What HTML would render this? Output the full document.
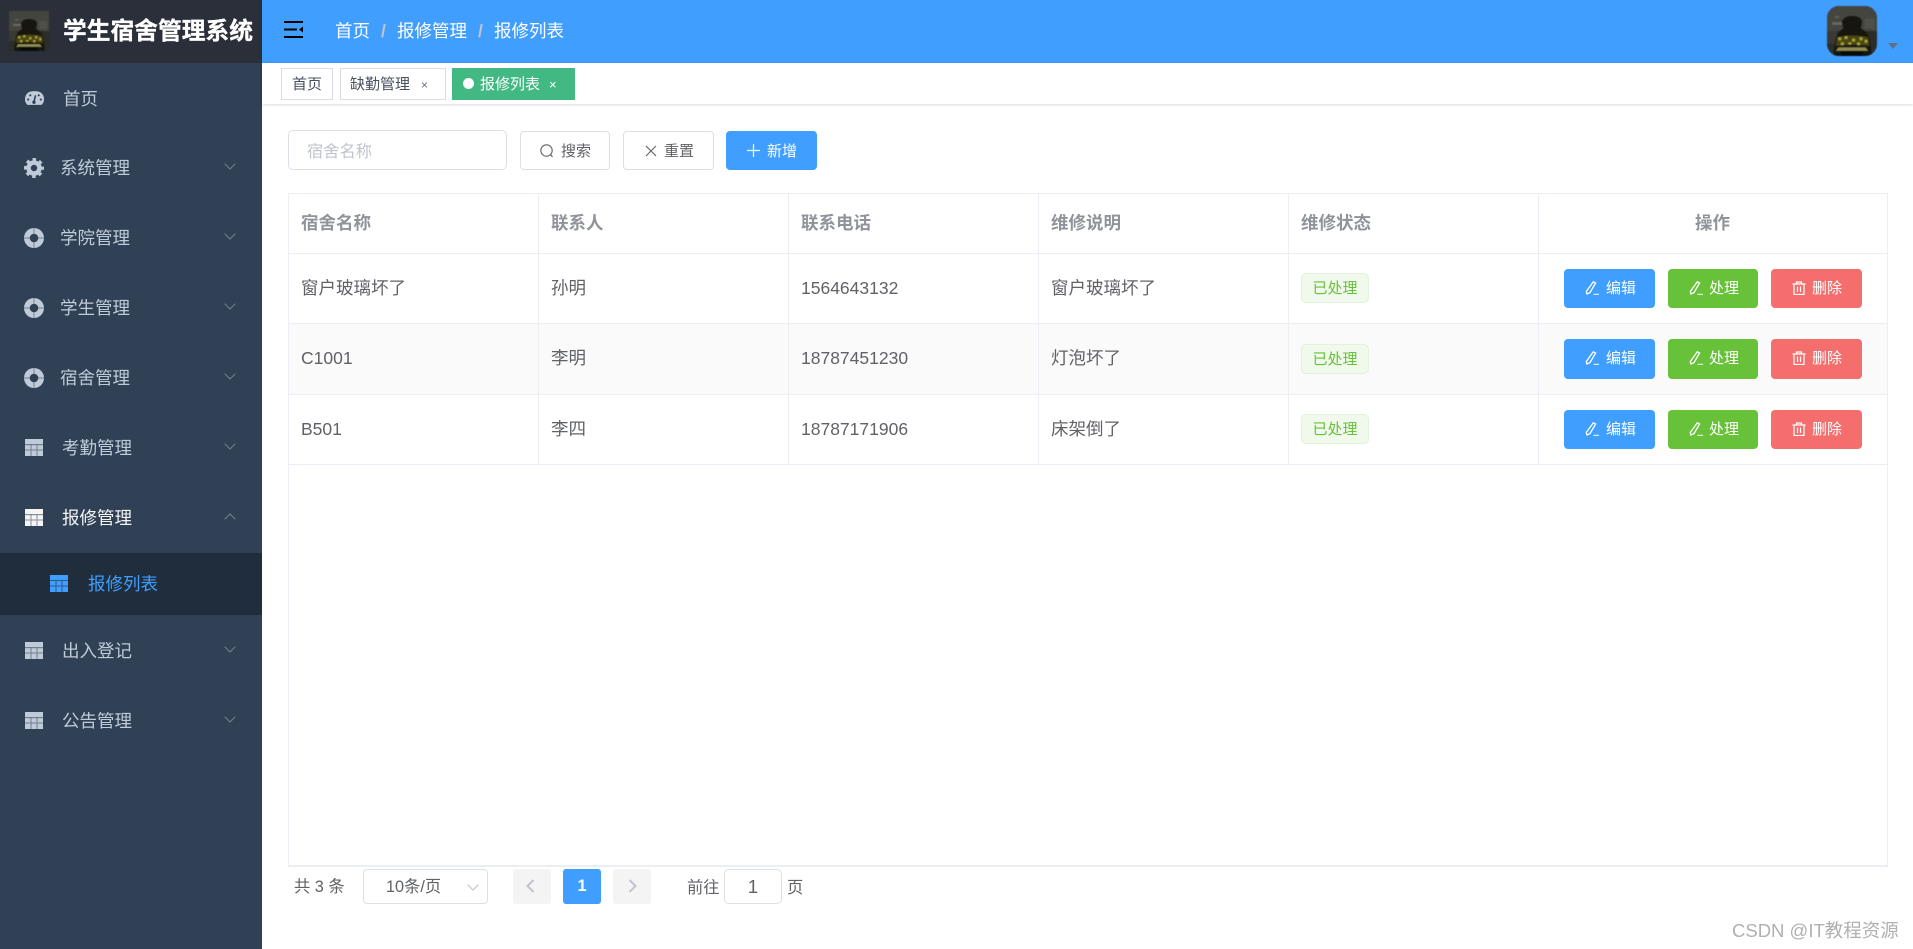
<!DOCTYPE html>
<html lang="zh-CN"><head><meta charset="utf-8"><title>学生宿舍管理系统</title>
<style>
*{box-sizing:border-box}
html,body{margin:0;padding:0;width:1913px;height:949px;overflow:hidden;background:#fff;font-family:"Liberation Sans","Noto Sans CJK SC",sans-serif}
div,span,svg{position:absolute}
.t{white-space:nowrap}
.side{left:0;top:0;width:262px;height:949px;background:#304156}
.nav{left:60px;font-size:17.5px;line-height:30px;height:30px;color:#bfcbd9;white-space:nowrap}
.hd{font-size:17.5px;font-weight:700;color:#909399;line-height:30px;height:30px;top:208px;white-space:nowrap}
.c{font-size:17.5px;color:#606266;line-height:30px;height:30px;white-space:nowrap}
.hl{background:#ebeef5;height:1px;left:288px;width:1600px}
.vl{background:#ebeef5;width:1px}
.tagd{left:1301px;width:68px;height:30px;background:#f0f9eb;border:1px solid #e1f3d8;border-radius:5px;color:#67c23a;font-size:15px;line-height:29px;text-align:center}
.b{height:39px;border-radius:4px;color:#fff;font-size:15px}
.b span{white-space:nowrap;line-height:40px;top:0}
.tag{top:68px;height:32px;border:1px solid #d8dce5;background:#fff;color:#495060;font-size:15px;line-height:32px}
.wb{top:131px;height:39px;border:1px solid #dcdfe6;border-radius:4px;background:#fff;color:#606266;font-size:15px;line-height:38px}
.pic{filter:blur(.6px)}
</style></head><body>
<svg width="0" height="0" style="left:0;top:0"><defs>
<symbol id="pic" viewBox="0 0 40 40">
<rect width="40" height="40" fill="#2c2c28"/>
<rect x="0" y="0" width="40" height="20" fill="#45453f"/>
<rect x="0" y="20" width="8" height="10" fill="#3a3a34"/>
<rect x="4" y="13" width="8" height="2" fill="#6b6b60"/>
<rect x="6" y="8" width="4" height="1.500" fill="#5f5f55"/>
<rect x="30" y="10" width="8" height="8" fill="#50504a"/>
<path d="M5 40 L7 26 Q9 20 13 18 L12 13 Q13 8 20 8 Q28 8 28 13 L27 18 Q32 20 34 26 L36 40Z" fill="#16160f"/>
<path d="M8 25 Q20 22 33 25 L34 32 Q20 30 7 32Z" fill="#4a4716"/>
<g fill="#a8a530"><rect x="9" y="25" width="2.500" height="2.500"/><rect x="14" y="24" width="2.500" height="2.500"/><rect x="20" y="26" width="2.500" height="2.500"/><rect x="26" y="25" width="2.500" height="2.500"/><rect x="30" y="27" width="2.500" height="2.500"/><rect x="11" y="29" width="2.500" height="2.500"/><rect x="17" y="29" width="2.500" height="2"/><rect x="24" y="29" width="2.500" height="2.500"/></g>
<path d="M9 33 L31 33 L33 36 L7 36Z" fill="#8d8a4e"/>
<rect x="11" y="36" width="18" height="4" fill="#0a0a0a"/>
</symbol>
<symbol id="tb" viewBox="0 0 18 17"><rect width="18" height="17" fill="currentColor"/><rect x="0" y="5" width="18" height="1.200" fill="#304156" opacity=".55"/><path d="M6 5.500V17M12 5.500V17M0 11H18" stroke="#304156" stroke-width="1" opacity=".55" fill="none"/></symbol>
<symbol id="buoy" viewBox="0 0 20 20"><circle cx="10" cy="10" r="10" fill="currentColor"/><circle cx="10" cy="10" r="4.300" fill="#304156"/><path d="M10 0V6M10 14V20M0 10H6M14 10H20" stroke="#304156" stroke-width=".7" opacity=".7"/></symbol>
<symbol id="chev" viewBox="0 0 12 7"><path d="M.7.7 6 6 11.300.7" fill="none" stroke="#77828f" stroke-width="1"/></symbol>
<symbol id="pen" viewBox="0 0 14 14"><path d="M8.300.8 10.600 2 5 11.600 1.900 13 1.300 10.500Z" fill="none" stroke="#fff" stroke-width="1.300"/><path d="M8.500 13.300H14" stroke="#fff" stroke-width="1"/></symbol>
<symbol id="trash" viewBox="0 0 14 14"><path d="M.5 3H13.500M4.500 3V1H9.500V3M2 3V13.500H12V3M5.500 5.500V11M8.500 5.500V11" fill="none" stroke="#fff" stroke-width="1.200"/></symbol>
</defs></svg>

<div class="side"></div>
<div style="left:0;top:0;width:262px;height:63px;background:#2b2f3a"></div>
<svg class="pic" style="left:9px;top:11px" width="40" height="40"><use href="#pic"/></svg>
<div class="t" style="left:63px;top:12.500px;line-height:38px;font-size:23.750px;font-weight:700;color:#fff;-webkit-text-stroke:.3px #fff">学生宿舍管理系统</div>

<!-- gauge -->
<svg style="left:25px;top:91px" width="19" height="14" viewBox="0 0 18 13"><path d="M2.200 13Q0 10.500 0 8 0 0 9 0 18 0 18 8 18 10.500 15.800 13Z" fill="#bfcbd9"/><path d="M8.500 10 10 4" stroke="#304156" stroke-width="1.500"/><circle cx="8.500" cy="10.500" r="1.600" fill="#304156"/><circle cx="3" cy="8" r="1" fill="#304156"/><circle cx="5" cy="4" r="1" fill="#304156"/><circle cx="15" cy="8" r="1" fill="#304156"/><circle cx="13" cy="4" r="1" fill="#304156"/></svg>
<div class="nav" style="left:63px;top:83.500px">首页</div>
<!-- gear -->
<svg style="left:24px;top:158px" width="20" height="20" viewBox="0 0 20 20"><circle cx="10" cy="10" r="5.500" fill="none" stroke="#bfcbd9" stroke-width="4.500"/><circle cx="10" cy="10" r="8.600" fill="none" stroke="#bfcbd9" stroke-width="2.800" stroke-dasharray="3.500 3.250" stroke-dashoffset="1.700"/></svg>
<div class="nav" style="top:153px">系统管理</div>
<svg style="left:224px;top:163px" width="12" height="7"><use href="#chev"/></svg>

<svg style="left:24px;top:228px;color:#bfcbd9" width="20" height="20"><use href="#buoy"/></svg>
<div class="nav" style="top:223px">学院管理</div>
<svg style="left:224px;top:233px" width="12" height="7"><use href="#chev"/></svg>

<svg style="left:24px;top:298px;color:#bfcbd9" width="20" height="20"><use href="#buoy"/></svg>
<div class="nav" style="top:293px">学生管理</div>
<svg style="left:224px;top:303px" width="12" height="7"><use href="#chev"/></svg>

<svg style="left:24px;top:368px;color:#bfcbd9" width="20" height="20"><use href="#buoy"/></svg>
<div class="nav" style="top:363px">宿舍管理</div>
<svg style="left:224px;top:373px" width="12" height="7"><use href="#chev"/></svg>

<svg style="left:25px;top:439px;color:#bfcbd9" width="18" height="17"><use href="#tb"/></svg>
<div class="nav" style="left:62px;top:433px">考勤管理</div>
<svg style="left:224px;top:443px" width="12" height="7"><use href="#chev"/></svg>

<svg style="left:25px;top:509px;color:#f4f4f5" width="18" height="17"><use href="#tb"/></svg>
<div class="nav" style="left:62px;top:503px;color:#f4f4f5">报修管理</div>
<svg style="left:224px;top:513px" width="12" height="7" viewBox="0 0 12 7"><path d="M.7 6.300 6 1 11.300 6.300" fill="none" stroke="#77828f" stroke-width="1"/></svg>

<div style="left:0;top:553px;width:262px;height:62px;background:#1f2d3d"></div>
<svg style="left:50px;top:575px" width="18" height="17" viewBox="0 0 18 17"><rect width="18" height="17" fill="#409eff"/><path d="M0 5.500H18M0 11H18M6 5.500V17M12 5.500V17" stroke="#1f2d3d" stroke-width="1" opacity=".6"/></svg>
<div class="nav" style="left:88px;top:569px;color:#409eff">报修列表</div>

<svg style="left:25px;top:642px;color:#bfcbd9" width="18" height="17"><use href="#tb"/></svg>
<div class="nav" style="left:62px;top:636px">出入登记</div>
<svg style="left:224px;top:646px" width="12" height="7"><use href="#chev"/></svg>

<svg style="left:25px;top:712px;color:#bfcbd9" width="18" height="17"><use href="#tb"/></svg>
<div class="nav" style="left:62px;top:706px">公告管理</div>
<svg style="left:224px;top:716px" width="12" height="7"><use href="#chev"/></svg>

<!-- header -->
<div style="left:262px;top:0;width:1651px;height:63px;background:#409eff"></div>
<svg style="left:284px;top:21px" width="19" height="17" viewBox="0 0 19 17"><path d="M0 1H19M0 8.500H13M0 16H19" stroke="#000" stroke-width="2"/><path d="M19 5.500 15 8.500 19 11.500Z" fill="#000"/></svg>
<div class="t" style="left:335px;top:16px;line-height:30px;font-size:17.500px;color:#fff">首页</div>
<div class="t" style="left:381px;top:16px;line-height:30px;font-size:17.500px;color:#c0c4cc;font-weight:700">/</div>
<div class="t" style="left:397px;top:16px;line-height:30px;font-size:17.500px;color:#fff">报修管理</div>
<div class="t" style="left:478px;top:16px;line-height:30px;font-size:17.500px;color:#c0c4cc;font-weight:700">/</div>
<div class="t" style="left:494px;top:16px;line-height:30px;font-size:17.500px;color:#fff">报修列表</div>
<div class="pic" style="left:1827px;top:6px;width:50px;height:50px;border-radius:12px;overflow:hidden"><svg style="left:0;top:0" width="50" height="50"><use href="#pic"/></svg></div>
<svg style="left:1888px;top:43px" width="10" height="6" viewBox="0 0 10 6"><path d="M0 0H10L5 6Z" fill="#5f6f85"/></svg>

<!-- tags bar -->
<div style="left:262px;top:63px;width:1651px;height:41px;background:#fff;box-shadow:0 1px 3px rgba(0,0,0,.12),0 0 3px rgba(0,0,0,.04)"></div>
<div class="tag" style="left:281px;width:52px;padding-left:10px">首页</div>
<div class="tag" style="left:340px;width:106px;padding-left:9px">缺勤管理<span style="left:80px;top:0;font-size:12px;color:#6b7280">×</span></div>
<div class="tag" style="left:452px;width:123px;background:#42b983;border-color:#42b983;color:#fff;padding-left:27px"><span style="left:10px;top:9px;width:11px;height:11px;border-radius:50%;background:#fff"></span>报修列表<span style="left:96px;top:0;font-size:13px">×</span></div>

<!-- search row -->
<div style="left:288px;top:130px;width:219px;height:40px;border:1px solid #dcdfe6;border-radius:5px;background:#fff"></div>
<div class="t" style="left:307px;top:136.500px;line-height:30px;font-size:16.250px;color:#c0c4cc">宿舍名称</div>
<div class="wb" style="left:520px;width:90px"><span class="t" style="left:40px;top:1px">搜索</span></div>
<svg style="left:540px;top:144px" width="14" height="14" viewBox="0 0 14 14"><circle cx="6.500" cy="6.500" r="5.700" fill="none" stroke="#606266" stroke-width="1.100"/><path d="M10.500 10.500 12.500 13" stroke="#606266" stroke-width="1.100"/></svg>
<div class="wb" style="left:623px;width:91px"><span class="t" style="left:40px;top:1px">重置</span></div>
<svg style="left:645px;top:145px" width="12" height="12" viewBox="0 0 12 12"><path d="M1 1 11 11M11 1 1 11" stroke="#606266" stroke-width="1.100"/></svg>
<div class="wb" style="left:726px;top:131px;width:91px;background:#409eff;border-color:#409eff;color:#fff"><span class="t" style="left:40px;top:1px">新增</span></div>
<svg style="left:747px;top:144px" width="13" height="13" viewBox="0 0 13 13"><path d="M6.500 0V13M0 6.500H13" stroke="#fff" stroke-width="1.200"/></svg>

<!-- table -->
<div style="left:288px;top:323px;width:1600px;height:71px;background:#fafafa"></div>
<div class="hl" style="top:193px"></div>
<div class="hl" style="top:253px"></div>
<div class="hl" style="top:323px"></div>
<div class="hl" style="top:394px"></div>
<div class="hl" style="top:464px"></div>
<div class="hl" style="top:865px;height:2px"></div>
<div class="vl" style="left:288px;top:193px;height:673px"></div>
<div class="vl" style="left:1887px;top:193px;height:673px"></div>
<div class="vl" style="left:538px;top:193px;height:271px"></div>
<div class="vl" style="left:788px;top:193px;height:271px"></div>
<div class="vl" style="left:1038px;top:193px;height:271px"></div>
<div class="vl" style="left:1288px;top:193px;height:271px"></div>
<div class="vl" style="left:1538px;top:193px;height:271px"></div>

<div class="hd" style="left:301px">宿舍名称</div>
<div class="hd" style="left:551px">联系人</div>
<div class="hd" style="left:801px">联系电话</div>
<div class="hd" style="left:1051px">维修说明</div>
<div class="hd" style="left:1301px">维修状态</div>
<div class="hd" style="left:1695px">操作</div>

<div class="c" style="left:301px;top:273px">窗户玻璃坏了</div>
<div class="c" style="left:551px;top:273px">孙明</div>
<div class="c" style="left:801px;top:273px">1564643132</div>
<div class="c" style="left:1051px;top:273px">窗户玻璃坏了</div>
<div class="tagd" style="top:273px">已处理</div>

<div class="c" style="left:301px;top:343px">C1001</div>
<div class="c" style="left:551px;top:343px">李明</div>
<div class="c" style="left:801px;top:343px">18787451230</div>
<div class="c" style="left:1051px;top:343px">灯泡坏了</div>
<div class="tagd" style="top:344px">已处理</div>

<div class="c" style="left:301px;top:414px">B501</div>
<div class="c" style="left:551px;top:414px">李四</div>
<div class="c" style="left:801px;top:414px">18787171906</div>
<div class="c" style="left:1051px;top:414px">床架倒了</div>
<div class="tagd" style="top:414px">已处理</div>

<!-- row buttons -->
<div class="b" style="left:1564px;top:269px;width:91px;background:#409eff"><span style="left:42px">编辑</span></div>
<svg style="left:1585px;top:281px" width="14" height="14"><use href="#pen"/></svg>
<div class="b" style="left:1668px;top:269px;width:90px;background:#67c23a"><span style="left:41px">处理</span></div>
<svg style="left:1689px;top:281px" width="14" height="14"><use href="#pen"/></svg>
<div class="b" style="left:1771px;top:269px;width:91px;background:#f56c6c;opacity:.98"><span style="left:41px">删除</span></div>
<svg style="left:1792px;top:281px" width="14" height="14"><use href="#trash"/></svg>

<div class="b" style="left:1564px;top:339px;width:91px;height:40px;background:#409eff"><span style="left:42px">编辑</span></div>
<svg style="left:1585px;top:351px" width="14" height="14"><use href="#pen"/></svg>
<div class="b" style="left:1668px;top:339px;width:90px;height:40px;background:#67c23a"><span style="left:41px">处理</span></div>
<svg style="left:1689px;top:351px" width="14" height="14"><use href="#pen"/></svg>
<div class="b" style="left:1771px;top:339px;width:91px;height:40px;background:#f56c6c;opacity:.98"><span style="left:41px">删除</span></div>
<svg style="left:1792px;top:351px" width="14" height="14"><use href="#trash"/></svg>

<div class="b" style="left:1564px;top:410px;width:91px;background:#409eff"><span style="left:42px">编辑</span></div>
<svg style="left:1585px;top:422px" width="14" height="14"><use href="#pen"/></svg>
<div class="b" style="left:1668px;top:410px;width:90px;background:#67c23a"><span style="left:41px">处理</span></div>
<svg style="left:1689px;top:422px" width="14" height="14"><use href="#pen"/></svg>
<div class="b" style="left:1771px;top:410px;width:91px;background:#f56c6c;opacity:.98"><span style="left:41px">删除</span></div>
<svg style="left:1792px;top:422px" width="14" height="14"><use href="#trash"/></svg>

<!-- pagination -->
<div class="t" style="left:294px;top:872px;line-height:30px;font-size:16.250px;color:#606266">共 3 条</div>
<div style="left:363px;top:869px;width:125px;height:35px;border:1px solid #dcdfe6;border-radius:4px"></div>
<div class="t" style="left:386px;top:872px;line-height:30px;font-size:16.250px;color:#606266">10条/页</div>
<svg style="left:467px;top:884px" width="12" height="7" viewBox="0 0 12 7"><path d="M.7.7 6 6 11.300.7" fill="none" stroke="#c0c4cc" stroke-width="1.100"/></svg>
<div style="left:513px;top:869px;width:38px;height:35px;background:#f4f4f5;border-radius:3px"></div>
<svg style="left:526px;top:879px" width="9" height="14" viewBox="0 0 9 14"><path d="M7.500 1 1.500 7 7.500 13" fill="none" stroke="#c0c4cc" stroke-width="2"/></svg>
<div style="left:563px;top:869px;width:38px;height:35px;background:#409eff;border-radius:3px;color:#fff;font-size:16.250px;font-weight:700;line-height:35px;text-align:center">1</div>
<div style="left:613px;top:869px;width:38px;height:35px;background:#f4f4f5;border-radius:3px"></div>
<svg style="left:628px;top:879px" width="9" height="14" viewBox="0 0 9 14"><path d="M1.500 1 7.500 7 1.500 13" fill="none" stroke="#c0c4cc" stroke-width="2"/></svg>
<div class="t" style="left:687px;top:873px;line-height:30px;font-size:16.250px;color:#606266">前往</div>
<div style="left:724px;top:869px;width:58px;height:35px;border:1px solid #dcdfe6;border-radius:5px;text-align:center;line-height:33px;font-size:18.750px;color:#606266">1</div>
<div class="t" style="left:787px;top:873px;line-height:30px;font-size:16.250px;color:#606266">页</div>

<div class="t" style="left:1732px;top:916px;line-height:30px;font-size:18.500px;color:#b0b0b0">CSDN @IT教程资源</div>
</body></html>
